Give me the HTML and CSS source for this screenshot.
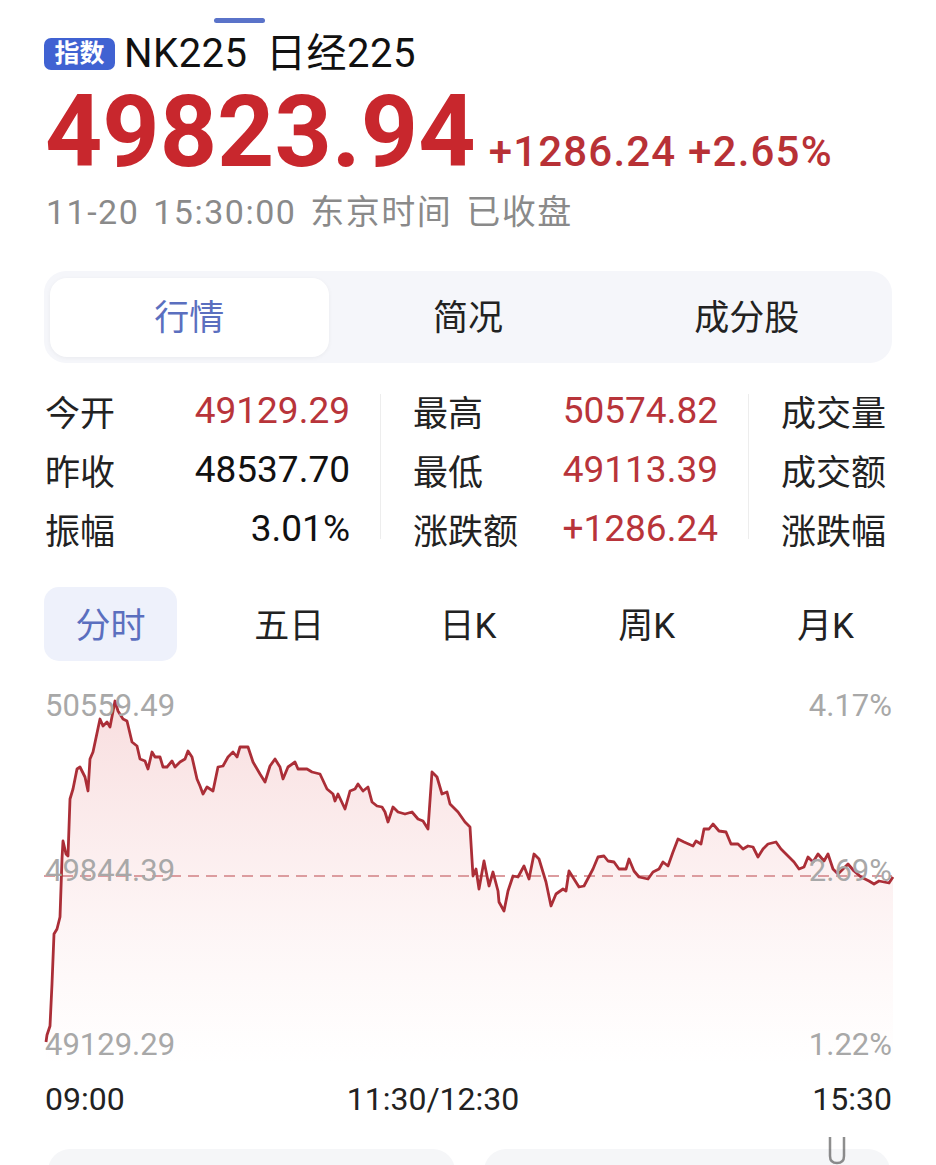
FILE: index.html
```html
<!DOCTYPE html>
<html>
<head>
    <title>NK225 日经225</title>
    <link rel="stylesheet" href="styles.css">
</head>
<body>
    <div class="page">
        <div class="top-indicator"></div>

        <div class="title-row">
            <span class="badge">指数</span>
            <span class="title">NK225 日经225</span>
        </div>

        <div class="price-row">
            <span class="price">49823.94</span>
            <span class="change">+1286.24 +2.65%</span>
        </div>
        <div class="meta">11-20 15:30:00 东京时间 已收盘</div>

        <!-- Section tabs -->
        <div class="segment">
            <div class="segment-item active">行情</div>
            <div class="segment-item">简况</div>
            <div class="segment-item">成分股</div>
        </div>

        <!-- Quote stats -->
        <div class="stats">
            <div class="stat-col">
                <div class="stat-row"><span class="stat-label">今开</span><span class="stat-value up">49129.29</span></div>
                <div class="stat-row"><span class="stat-label">昨收</span><span class="stat-value">48537.70</span></div>
                <div class="stat-row"><span class="stat-label">振幅</span><span class="stat-value">3.01%</span></div>
            </div>
            <div class="stat-divider"></div>
            <div class="stat-col">
                <div class="stat-row"><span class="stat-label">最高</span><span class="stat-value up">50574.82</span></div>
                <div class="stat-row"><span class="stat-label">最低</span><span class="stat-value up">49113.39</span></div>
                <div class="stat-row"><span class="stat-label">涨跌额</span><span class="stat-value up">+1286.24</span></div>
            </div>
            <div class="stat-divider"></div>
            <div class="stat-col last">
                <div class="stat-row"><span class="stat-label">成交量</span></div>
                <div class="stat-row"><span class="stat-label">成交额</span></div>
                <div class="stat-row"><span class="stat-label">涨跌幅</span></div>
            </div>
        </div>

        <!-- Chart periods -->
        <div class="periods">
            <div class="period active">分时</div>
            <div class="period">五日</div>
            <div class="period">日K</div>
            <div class="period">周K</div>
            <div class="period">月K</div>
        </div>

        <!-- Intraday chart -->
        <div class="chart">
            <svg class="chart-svg" width="848" height="380" viewBox="44 688 848 380">
                <defs>
                    <linearGradient id="areaFill" x1="0" y1="0" x2="0" y2="1">
                        <stop offset="0" stop-color="#e06a6e" stop-opacity="0.22"/>
                        <stop offset="0.6" stop-color="#e87a7e" stop-opacity="0.08"/>
                        <stop offset="1" stop-color="#f09090" stop-opacity="0"/>
                    </linearGradient>
                </defs>
                <path class="area" fill="url(#areaFill)" d="M46,1043 L47,1036 L49,1030 L50,1027 L52,985 L54,935 L57,930 L60,918 L62,860 L63,842 L66,855 L68,857 L70,800 L73,790 L77,770 L80,768 L85,778 L88,792 L90,760 L93,753 L100,720 L103,727 L107,723 L110,728 L115,702 L118,712 L123,720 L127,722 L132,743 L137,747 L140,760 L145,762 L148,770 L152,753 L155,758 L160,758 L163,768 L167,768 L172,762 L175,768 L180,763 L185,760 L188,752 L192,758 L197,780 L200,787 L203,795 L207,788 L213,792 L218,768 L223,767 L228,758 L233,753 L237,758 L240,748 L248,748 L253,763 L260,775 L265,783 L270,767 L275,760 L280,768 L283,780 L288,768 L295,763 L298,770 L307,770 L312,773 L320,775 L327,790 L333,795 L335,802 L338,795 L345,810 L350,792 L355,790 L358,785 L363,792 L368,788 L372,803 L377,807 L382,808 L385,813 L388,823 L393,808 L398,813 L405,815 L412,813 L418,820 L423,822 L428,830 L432,773 L437,778 L442,795 L447,793 L450,805 L458,813 L465,823 L470,828 L473,877 L476,870 L479,890 L484,862 L489,887 L493,873 L498,892 L499,903 L504,912 L508,892 L513,877 L518,878 L524,867 L529,880 L534,855 L539,860 L546,883 L551,907 L556,895 L563,890 L566,892 L569,872 L574,880 L579,888 L584,887 L593,870 L598,858 L604,857 L608,862 L614,863 L619,870 L626,870 L629,860 L634,872 L639,878 L648,880 L653,873 L659,870 L663,863 L668,867 L673,853 L678,840 L684,843 L693,847 L696,842 L701,845 L704,830 L709,830 L713,825 L719,832 L726,833 L731,845 L738,845 L743,850 L748,847 L753,848 L758,858 L763,850 L768,845 L776,843 L781,850 L788,857 L794,863 L799,870 L804,868 L808,858 L813,863 L818,855 L824,862 L828,855 L833,870 L838,875 L843,870 L848,865 L854,872 L861,878 L869,882 L874,885 L879,882 L889,884 L893,878 L893,1066 L46,1066 Z"/>
                <line class="base-line" x1="44" y1="877" x2="892" y2="877"/>
                <path class="price-line" d="M46,1043 L47,1036 L49,1030 L50,1027 L52,985 L54,935 L57,930 L60,918 L62,860 L63,842 L66,855 L68,857 L70,800 L73,790 L77,770 L80,768 L85,778 L88,792 L90,760 L93,753 L100,720 L103,727 L107,723 L110,728 L115,702 L118,712 L123,720 L127,722 L132,743 L137,747 L140,760 L145,762 L148,770 L152,753 L155,758 L160,758 L163,768 L167,768 L172,762 L175,768 L180,763 L185,760 L188,752 L192,758 L197,780 L200,787 L203,795 L207,788 L213,792 L218,768 L223,767 L228,758 L233,753 L237,758 L240,748 L248,748 L253,763 L260,775 L265,783 L270,767 L275,760 L280,768 L283,780 L288,768 L295,763 L298,770 L307,770 L312,773 L320,775 L327,790 L333,795 L335,802 L338,795 L345,810 L350,792 L355,790 L358,785 L363,792 L368,788 L372,803 L377,807 L382,808 L385,813 L388,823 L393,808 L398,813 L405,815 L412,813 L418,820 L423,822 L428,830 L432,773 L437,778 L442,795 L447,793 L450,805 L458,813 L465,823 L470,828 L473,877 L476,870 L479,890 L484,862 L489,887 L493,873 L498,892 L499,903 L504,912 L508,892 L513,877 L518,878 L524,867 L529,880 L534,855 L539,860 L546,883 L551,907 L556,895 L563,890 L566,892 L569,872 L574,880 L579,888 L584,887 L593,870 L598,858 L604,857 L608,862 L614,863 L619,870 L626,870 L629,860 L634,872 L639,878 L648,880 L653,873 L659,870 L663,863 L668,867 L673,853 L678,840 L684,843 L693,847 L696,842 L701,845 L704,830 L709,830 L713,825 L719,832 L726,833 L731,845 L738,845 L743,850 L748,847 L753,848 L758,858 L763,850 L768,845 L776,843 L781,850 L788,857 L794,863 L799,870 L804,868 L808,858 L813,863 L818,855 L824,862 L828,855 L833,870 L838,875 L843,870 L848,865 L854,872 L861,878 L869,882 L874,885 L879,882 L889,884 L893,878"/>
            </svg>
            <span class="axis-label left top">50559.49</span>
            <span class="axis-label right top">4.17%</span>
            <span class="axis-label left mid">49844.39</span>
            <span class="axis-label right mid">2.69%</span>
            <span class="axis-label left bottom">49129.29</span>
            <span class="axis-label right bottom">1.22%</span>
        </div>

        <div class="time-axis">
            <span>09:00</span>
            <span class="time-mid">11:30/12:30</span>
            <span class="time-end">15:30</span>
        </div>

        <div class="cards">
            <div class="card"></div>
            <div class="card"></div>
        </div>

        <!-- faint scroll handle over the bottom right -->
        <svg class="handle" width="150" height="30" viewBox="0 0 150 30">
            <defs>
                <linearGradient id="handleFade" x1="0" y1="0" x2="1" y2="0">
                    <stop offset="0" stop-color="#bbb" stop-opacity="0"/>
                    <stop offset="0.8" stop-color="#999" stop-opacity="0.4"/>
                    <stop offset="1" stop-color="#333" stop-opacity="0.9"/>
                </linearGradient>
            </defs>
            <line x1="0" y1="4" x2="148" y2="4" stroke="url(#handleFade)" stroke-width="2.5"/>
            <line x1="0" y1="14" x2="148" y2="14" stroke="url(#handleFade)" stroke-width="2.5"/>
            <line x1="0" y1="25" x2="148" y2="25" stroke="url(#handleFade)" stroke-width="2.5"/>
            <path d="M62,2 V21 Q62,28 69,28 Q76,28 76,21 V2" fill="none" stroke="#444" stroke-width="2.5"/>
        </svg>
    </div>
</body>
</html>
```

FILE: styles.css
```css
body {
    margin: 0;
    background: #fff;
    font-family: Roboto, "Noto Sans CJK SC", sans-serif;
    color: #111;
    overflow: hidden;
}
.page {
    position: relative;
    padding: 0 44px;
    height: 1165px;
}
.top-indicator {
    width: 51px;
    height: 5px;
    margin: 18px 0 0 170px;
    border-radius: 3px;
    background-color: #5a73c9;
}
.title-row {
    display: flex;
    align-items: center;
    height: 46px;
    margin-top: 8px;
}
.badge {
    display: inline-block;
    width: 71px;
    height: 32px;
    line-height: 32px;
    text-align: center;
    border-radius: 7px;
    background-color: #4062d2;
    color: #fff;
    font-size: 25px;
    font-weight: bold;
}
.title {
    margin-left: 9px;
    font-size: 40px;
    line-height: 46px;
    letter-spacing: 0.5px;
    word-spacing: 8px;
    color: #111;
}
.price-row {
    display: flex;
    align-items: baseline;
    margin-top: 5px;
    line-height: 1;
}
.price {
    font-size: 100px;
    font-weight: bold;
    color: #c8272d;
    margin-left: 1px;
}
.change {
    margin-left: 13px;
    font-size: 42px;
    font-weight: 500;
    color: #b83136;
    letter-spacing: 1.2px;
}
.meta {
    margin-top: 13px;
    margin-left: 2px;
    font-size: 34px;
    line-height: 34px;
    letter-spacing: 1.5px;
    word-spacing: 4px;
    color: #8a8a8a;
}
.segment {
    display: flex;
    margin-top: 42px;
    height: 92px;
    padding: 7px 6px 6px;
    box-sizing: border-box;
    border-radius: 22px;
    background-color: #f5f6fa;
}
.segment-item {
    flex: 1;
    display: flex;
    align-items: center;
    justify-content: center;
    padding-bottom: 6px;
    font-size: 35px;
    color: #222;
    border-radius: 17px;
}
.segment-item.active {
    background-color: #fff;
    color: #5b6fbf;
    box-shadow: 0 1px 4px rgba(0, 0, 0, 0.05);
}
.stats {
    display: flex;
    margin-top: 18px;
    overflow: hidden;
}
.stat-col {
    width: 305px;
    flex-shrink: 0;
}
.stat-col:first-child {
    margin-left: 1px;
}
.stat-col.last {
    width: auto;
}
.stat-row {
    display: flex;
    justify-content: space-between;
    align-items: center;
    height: 59px;
}
.stat-label {
    font-size: 35px;
    color: #222;
}
.stat-value {
    font-size: 37px;
    color: #111;
}
.stat-value.up {
    color: #b8343a;
}
.stat-divider {
    width: 1px;
    flex-shrink: 0;
    background-color: #ededed;
    margin: 13px 32px 19px 30px;
}
.periods {
    display: flex;
    justify-content: space-between;
    margin-top: 29px;
}
.period {
    width: 133px;
    height: 74px;
    display: flex;
    align-items: center;
    justify-content: center;
    padding-bottom: 4px;
    box-sizing: border-box;
    font-size: 35px;
    color: #222;
    border-radius: 15px;
}
.period.active {
    background-color: #eef1fb;
    color: #5b6fbf;
}
.chart {
    position: relative;
    height: 380px;
    margin-top: 26px;
}
.chart-svg {
    display: block;
    overflow: visible;
}
.price-line {
    fill: none;
    stroke: #ab2e37;
    stroke-width: 2.8;
    stroke-linejoin: round;
}
.base-line {
    stroke: #dc9c9f;
    stroke-width: 2;
    stroke-dasharray: 11 7;
}
.axis-label {
    position: absolute;
    font-size: 31px;
    line-height: 31px;
    color: #a8a8a8;
}
.axis-label.left {
    left: 1px;
}
.axis-label.right {
    right: 0;
}
.axis-label.top {
    top: 3px;
}
.axis-label.mid {
    top: 168px;
}
.axis-label.bottom {
    top: 342px;
}
.time-axis {
    display: flex;
    margin-top: 16px;
    font-size: 32px;
    line-height: 32px;
    color: #222;
}
.time-axis span:first-child {
    margin-left: 1px;
}
.time-mid {
    margin-left: 222px;
}
.time-end {
    margin-left: auto;
}
.cards {
    display: flex;
    gap: 29px;
    margin: 34px 2px 0 4px;
}
.card {
    flex: 1;
    height: 110px;
    border-radius: 22px;
    background-color: #f5f6f8;
}
.handle {
    position: absolute;
    left: 768px;
    top: 1117px;
    opacity: 0.6;
}
```
